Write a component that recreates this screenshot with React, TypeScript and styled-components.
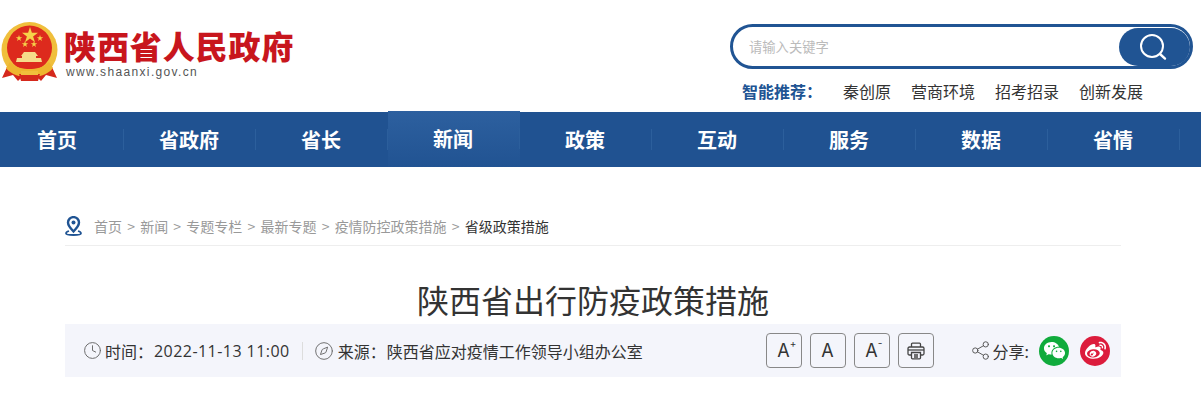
import React from "react";
import styled, { createGlobalStyle } from "styled-components";
import { Clock, Compass, Share2 } from "lucide-react";
import { RiWechatFill, RiWeiboFill } from "react-icons/ri";

const CJK = `"Noto Sans CJK SC", "Liberation Sans", sans-serif`;

const GlobalStyle = createGlobalStyle`
  html, body {
    margin: 0;
    padding: 0;
    background: #fff;
    overflow: hidden;
  }
  body {
    font-family: ${CJK};
    color: #333;
  }
`;

const Page = styled.div`
  width: 1201px;
  height: 408px;
`;

const Header = styled.header`
  display: flex;
  justify-content: space-between;
  height: 112px;
`;

const Logo = styled.div`
  display: flex;
  padding: 21px 0 0 1px;
`;

const LogoText = styled.div`
  margin-left: 6px;
  padding-top: 6px;
`;

const LogoTitle = styled.div`
  margin-left: -1px;
  font-size: 32px;
  line-height: 36px;
  font-weight: 900;
  letter-spacing: 0.9px;
  color: #c8161d;
  white-space: nowrap;
`;

const LogoUrl = styled.div`
  margin: 1px 0 0 1px;
  font-family: "Liberation Sans", sans-serif;
  font-size: 12px;
  line-height: 16px;
  letter-spacing: 1.35px;
  color: #555;
`;

const SearchArea = styled.div`
  width: 463px;
  margin-right: 8px;
  padding-top: 24px;
`;

const SearchBox = styled.div`
  box-sizing: border-box;
  display: flex;
  align-items: center;
  justify-content: space-between;
  height: 45px;
  padding: 0 0 0 16px;
  border: 3px solid #205493;
  border-radius: 23px;
`;

const Placeholder = styled.span`
  font-size: 13.3px;
  color: #bbb;
`;

const SearchButton = styled.div`
  box-sizing: border-box;
  display: flex;
  align-items: center;
  justify-content: center;
  width: 71px;
  height: 38px;
  padding-right: 3px;
  border-radius: 20px;
  background: #205493;
`;

const Suggest = styled.div`
  display: flex;
  align-items: center;
  height: 24px;
  margin-top: 10px;
  padding-left: 12px;
  font-size: 16px;
`;

const SuggestLabel = styled.span`
  width: 101px;
  font-weight: 700;
  color: #205493;
`;

const SuggestLink = styled.a`
  margin-right: 20px;
  color: #333;
`;

const Nav = styled.nav`
  display: flex;
  height: 55px;
  background: #205291;
`;

const NavItem = styled.div<{ $active?: boolean; $first?: boolean }>`
  position: relative;
  flex: none;
  display: flex;
  align-items: center;
  justify-content: center;
  box-sizing: border-box;
  width: ${(p) => (p.$first ? 124 : 132)}px;
  padding-right: ${(p) => (p.$first ? 10 : 2)}px;
  font-size: 20px;
  font-weight: 700;
  color: #fff;
  &::after {
    content: "";
    position: absolute;
    right: 0;
    top: 17px;
    width: 1px;
    height: 21px;
    background: #2c5f9c;
  }
  ${(p) =>
    p.$active &&
    `
    height: 56px;
    margin-top: -1px;
    padding-bottom: 2px;
    background: linear-gradient(#2d609f, #215392);
  `}
`;

const Content = styled.main`
  width: 1056px;
  margin-left: 65px;
`;

const Crumbs = styled.div`
  display: flex;
  align-items: center;
  gap: 12px;
  height: 38px;
  margin-top: 40px;
  border-bottom: 1px solid #eee;
  font-size: 14px;
  color: #999;
`;

const CrumbLine = styled.div`
  display: flex;
  gap: 5.2px;
`;

const CrumbCurrent = styled.span`
  color: #333;
`;

const Title = styled.h1`
  margin: 30px 0 0;
  height: 48px;
  font-size: 32px;
  line-height: 46px;
  font-weight: 400;
  text-align: center;
  color: #333;
`;

const InfoBar = styled.div`
  display: flex;
  align-items: center;
  justify-content: space-between;
  height: 53px;
  padding: 0 11px 0 18px;
  background: #f4f5fb;
  font-size: 16px;
`;

const Meta = styled.div`
  display: flex;
  align-items: center;
`;

const MetaLabel = styled.span`
  margin-right: 1px;
`;

const MetaDate = styled.span`
  margin-right: 12px;
  font-family: "Open Sans", sans-serif;
  letter-spacing: 0.45px;
`;

const Divider = styled.span`
  width: 1px;
  height: 18px;
  margin-right: 11px;
  background: #ddd;
`;

const MetaIcon = styled.span<{ $gap: number }>`
  display: flex;
  margin-right: ${(p) => p.$gap}px;
  color: #666;
`;

const Tools = styled.div`
  display: flex;
  align-items: center;
`;

const FontButton = styled.div`
  box-sizing: border-box;
  display: flex;
  align-items: center;
  justify-content: center;
  width: 36px;
  height: 35px;
  margin-right: 8px;
  border: 1px solid #888;
  border-radius: 4px;
  font-family: "Inter", "Liberation Sans", sans-serif;
  font-size: 18px;
  color: #333;
`;

const Sup = styled.span`
  align-self: flex-start;
  width: 6px;
  margin: 3px -6px 0 0;
  font-size: 10px;
  line-height: 12px;
`;

const ShareIcon = styled.span`
  display: flex;
  margin: 0 2px 0 28px;
  color: #555;
`;

const ShareLabel = styled.span`
  margin-right: 10px;
`;

const SocialDot = styled.span<{ $bg: string; $gap?: number }>`
  display: flex;
  align-items: center;
  justify-content: center;
  width: 30px;
  height: 30px;
  margin-right: ${(p) => p.$gap ?? 0}px;
  border-radius: 50%;
  background: ${(p) => p.$bg};
  color: #fff;
`;

const Emblem = () => (
  <svg width="58" height="62" viewBox="0 0 58 62">
    <path d="M7 44 L1 57 L12 54 L17 60 L25 52 Z" fill="#d5281c" />
    <path d="M50 44 L56 57 L45 54 L40 60 L32 52 Z" fill="#d5281c" />
    <circle cx="28.500" cy="29" r="28" fill="#f0bf3c" />
    <circle cx="28.500" cy="27" r="22.500" fill="#dd2a1d" />
    <path d="M29 6l1.900 5.800h6.100l-4.900 3.600 1.900 5.800-5-3.600-5 3.600 1.900-5.800-4.900-3.600h6.100z" fill="#f6d24a" />
    <path d="M18 14l.8 2.300h2.400l-2 1.400.8 2.300-2-1.400-2 1.400.8-2.300-2-1.400h2.400zM39 14l.8 2.300h2.400l-2 1.400.8 2.300-2-1.400-2 1.400.8-2.300-2-1.400h2.400zM24 20l.8 2.300h2.400l-2 1.400.8 2.300-2-1.400-2 1.400.8-2.300-2-1.400h2.400zM33 20l.8 2.300h2.400l-2 1.400.8 2.300-2-1.400-2 1.400.8-2.300-2-1.400h2.400z" fill="#f6d24a" />
    <path d="M20 35l3-4h11l3 4h-2v2h5l1 4H15l1-4h5v-2z" fill="#f6dc8a" />
    <path d="M9 41c6 6 13 7 19.500 7S42 47 48 41l4 6c-5 7-15 9-23.500 9S10 54 5 47z" fill="#eeb62f" />
    <path d="M18 53h21l-2 7H20z" fill="#d5281c" />
    <path d="M20 50h17v4H20z" fill="#f0bf3c" />
  </svg>
);

const SearchIcon = () => (
  <svg width="28" height="28" viewBox="0 0 28 28" fill="none" stroke="#fff">
    <circle cx="13" cy="13" r="11" strokeWidth="2" />
    <path d="M21 21l5 4.600" strokeWidth="2.400" strokeLinecap="round" />
  </svg>
);

const PinIcon = () => (
  <svg width="17" height="20" viewBox="0 0 17 20" fill="none" stroke="#205493">
    <path d="M8.500 15.500C5.500 12.500 3 10 3 6.600a5.500 5.500 0 0 1 11 0c0 3.400-2.500 5.900-5.500 8.900z" strokeWidth="2.400" />
    <circle cx="8.500" cy="6.500" r="2" fill="#205493" stroke="none" />
    <path d="M4 15c-2 .6-3 1.300-3 2.200C1 18.400 4.300 19 8.500 19s7.500-.6 7.500-1.800c0-.9-1-1.600-3-2.200" strokeWidth="1.800" />
  </svg>
);

const PrintIcon = () => (
  <svg width="18" height="18" viewBox="0 0 18 18" fill="none" stroke="#444" strokeWidth="1.300">
    <path d="M4.500 5V2.200c0-.6.400-1 1-1h7c.6 0 1 .4 1 1V5" />
    <path d="M4 13H2.500c-1 0-1.500-.5-1.500-1.500V6.500C1 5.500 1.500 5 2.500 5h13c1 0 1.500.5 1.500 1.500v5c0 1-.5 1.500-1.500 1.500H14" />
    <path d="M1 8h16" />
    <path d="M4.500 10.500h9v5.300c0 .6-.4 1-1 1h-7c-.6 0-1-.4-1-1z" />
    <path d="M7 13h4M7 15h4" />
  </svg>
);

const navItems = ["首页", "省政府", "省长", "新闻", "政策", "互动", "服务", "数据", "省情"];
const suggestions = ["秦创原", "营商环境", "招考招录", "创新发展"];

export default function App() {
  return (
    <Page>
      <GlobalStyle />
      <Header>
        <Logo>
          <Emblem />
          <LogoText>
            <LogoTitle>陕西省人民政府</LogoTitle>
            <LogoUrl>www.shaanxi.gov.cn</LogoUrl>
          </LogoText>
        </Logo>
        <SearchArea>
          <SearchBox>
            <Placeholder>请输入关键字</Placeholder>
            <SearchButton>
              <SearchIcon />
            </SearchButton>
          </SearchBox>
          <Suggest>
            <SuggestLabel>智能推荐：</SuggestLabel>
            {suggestions.map((s) => (
              <SuggestLink key={s}>{s}</SuggestLink>
            ))}
          </Suggest>
        </SearchArea>
      </Header>
      <Nav>
        {navItems.map((n, i) => (
          <NavItem key={n} $first={i === 0} $active={n === "新闻"}>
            {n}
          </NavItem>
        ))}
      </Nav>
      <Content>
        <Crumbs>
          <PinIcon />
          <CrumbLine>
            <span>首页</span>
            <span>&gt;</span>
            <span>新闻</span>
            <span>&gt;</span>
            <span>专题专栏</span>
            <span>&gt;</span>
            <span>最新专题</span>
            <span>&gt;</span>
            <span>疫情防控政策措施</span>
            <span>&gt;</span>
            <CrumbCurrent>省级政策措施</CrumbCurrent>
          </CrumbLine>
        </Crumbs>
        <Title>陕西省出行防疫政策措施</Title>
        <InfoBar>
          <Meta>
            <MetaIcon $gap={3}>
              <Clock size={19} strokeWidth={1.2} />
            </MetaIcon>
            <MetaLabel>时间：</MetaLabel>
            <MetaDate>2022-11-13 11:00</MetaDate>
            <Divider />
            <MetaIcon $gap={4}>
              <Compass size={20} strokeWidth={1.1} />
            </MetaIcon>
            <MetaLabel>来源：</MetaLabel>
            <span>陕西省应对疫情工作领导小组办公室</span>
          </Meta>
          <Tools>
            <FontButton>
              A<Sup>+</Sup>
            </FontButton>
            <FontButton>A</FontButton>
            <FontButton>
              A<Sup>-</Sup>
            </FontButton>
            <FontButton>
              <PrintIcon />
            </FontButton>
            <ShareIcon>
              <Share2 size={21} strokeWidth={1.1} />
            </ShareIcon>
            <ShareLabel>分享:</ShareLabel>
            <SocialDot $bg="#10ab3c" $gap={11}>
              <RiWechatFill size={23} />
            </SocialDot>
            <SocialDot $bg="#dc1c3c">
              <RiWeiboFill size={23} />
            </SocialDot>
          </Tools>
        </InfoBar>
      </Content>
    </Page>
  );
}
